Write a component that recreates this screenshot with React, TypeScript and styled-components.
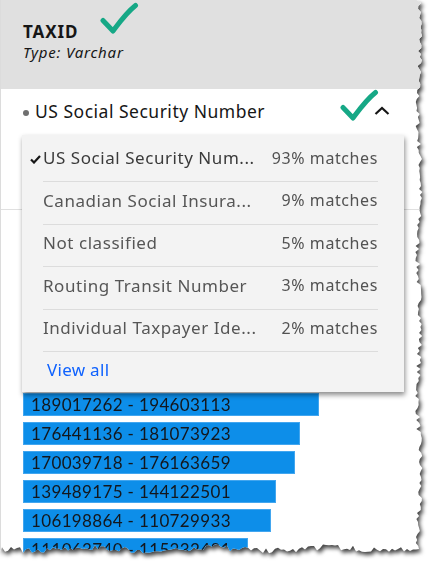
import React from 'react';
import styled, { createGlobalStyle } from 'styled-components';

const GlobalStyle = createGlobalStyle`
  html, body {
    margin: 0;
    padding: 0;
    background: #ffffff;
  }
  body {
    font-family: 'Noto Sans', Roboto, sans-serif;
    color: #161616;
  }
`;

const CARD_W = 428;
const CARD_H = 560;

// deterministic jagged "torn paper" outline for the right and bottom edges
const tornEdge = (): string => {
  let seed = 7;
  const rnd = () => {
    seed = (seed * 16807) % 2147483647;
    return seed / 2147483647;
  };
  const pts: string[] = ['0px 0px'];
  for (let y = 0; y <= 546; y += 3) {
    const x = 419 + (rnd() - 0.5) * 5 + Math.sin(y / 23) * 1.5;
    pts.push(`${x.toFixed(1)}px ${y}px`);
  }
  for (let x = 419; x >= 0; x -= 3) {
    const y = 549 + (rnd() - 0.5) * 6 + Math.sin(x / 19) * 1.5;
    pts.push(`${x}px ${y.toFixed(1)}px`);
  }
  pts.push('0px 552px');
  return `polygon(${pts.join(', ')})`;
};

const Page = styled.div`
  width: 436px;
  height: 572px;
  overflow: hidden;
  background: #ffffff;
`;

const Paper = styled.div`
  filter: drop-shadow(2px 3px 2px rgba(0, 0, 0, 0.75));
  width: ${CARD_W}px;
  height: ${CARD_H}px;
`;

const Card = styled.div`
  position: relative;
  width: ${CARD_W}px;
  height: ${CARD_H}px;
  background: #ffffff;
  border-left: 1px solid #dcdcdc;
  box-sizing: border-box;
`;

const Header = styled.div`
  height: 89px;
  background: #e0e0e0;
  padding: 22px 0 0 22px;
  box-sizing: border-box;
  display: flex;
  flex-direction: column;
  gap: 1px;
`;

const Title = styled.div`
  font-size: 17px;
  font-weight: 700;
  letter-spacing: 0.9px;
  line-height: 20px;
  color: #161616;
`;

const TypeLabel = styled.div`
  font-size: 15px;
  font-style: italic;
  font-weight: 400;
  letter-spacing: 0.8px;
  line-height: 18px;
  color: #161616;
`;

const SelectedRow = styled.div`
  height: 46px;
  display: flex;
  align-items: center;
  padding: 0 0 2px 22px;
  box-sizing: border-box;
  gap: 6px;
`;

const Dot = styled.span`
  width: 6px;
  height: 6px;
  border-radius: 50%;
  background: #6f6f6f;
  margin-top: 3px;
`;

const SelectedText = styled.span`
  font-size: 17.5px;
  letter-spacing: 0.5px;
  color: #161616;
  flex: 1;
`;

const Chevron = styled.svg`
  margin-right: 38px;
`;

const Divider = styled.div`
  height: 74px;
  border-bottom: 1px solid #e0e0e0;
`;

const Bars = styled.div`
  padding: 183px 0 0 22px;
  display: flex;
  flex-direction: column;
  gap: 6px;
`;

const Bar = styled.div<{ $w: number }>`
  width: ${p => p.$w}px;
  height: 23px;
  background: #0d8ee9;
  box-shadow: inset 0 0 0 1px rgba(120, 190, 245, 0.5);
  font-family: Lato, 'Noto Sans', sans-serif;
  font-size: 17px;
  letter-spacing: 0.35px;
  line-height: 23px;
  padding-left: 8px;
  box-sizing: border-box;
  color: #14171c;
  white-space: nowrap;
`;

const Menu = styled.div`
  position: absolute;
  top: 135px;
  left: 21px;
  width: 382px;
  height: 257px;
  background: #f3f3f3;
  box-shadow: 1px 3px 5px rgba(0, 0, 0, 0.45);
  padding: 4.5px 26px 0 21px;
  box-sizing: border-box;
`;

const MenuItem = styled.div<{ $selected?: boolean }>`
  position: relative;
  height: 42.5px;
  box-sizing: border-box;
  padding-bottom: 5px;
  border-bottom: 1px solid #dcdcdc;
  display: flex;
  align-items: center;
  justify-content: space-between;
  font-size: 17px;
  letter-spacing: 0.55px;
  color: ${p => (p.$selected ? '#3a3a3a' : '#565656')};
`;

const ItemCheck = styled.svg`
  position: absolute;
  left: -13px;
  top: 15px;
`;

const Matches = styled.span`
  color: #525252;
  font-size: 16px;
  letter-spacing: 0.6px;
`;

const ViewAll = styled.a`
  display: block;
  padding: 6px 0 0 4px;
  font-size: 17px;
  color: #0f62fe;
  letter-spacing: 0.3px;
`;

const Annotation = styled.svg`
  position: absolute;
`;

const GreenCheck: React.FC<{ left: number; top: number }> = ({ left, top }) => (
  <Annotation
    width="44"
    height="36"
    viewBox="0 0 44 36"
    style={{ left, top }}
  >
    <path
      d="M4 18.5 L14 29 C20 21 27 11 36.5 3.5"
      fill="none"
      stroke="#16a886"
      strokeWidth="5"
      strokeLinecap="round"
      strokeLinejoin="round"
    />
  </Annotation>
);

const items = [
  { label: 'US Social Security Num...', pct: '93% matches', selected: true },
  { label: 'Canadian Social Insura...', pct: '9% matches' },
  { label: 'Not classified', pct: '5% matches' },
  { label: 'Routing Transit Number', pct: '3% matches' },
  { label: 'Individual Taxpayer Ide...', pct: '2% matches' },
];

const bars = [
  { label: '189017262 - 194603113', w: 296 },
  { label: '176441136 - 181073923', w: 277 },
  { label: '170039718 - 176163659', w: 272 },
  { label: '139489175 - 144122501', w: 253 },
  { label: '106198864 - 110729933', w: 248 },
  { label: '111063740 - 115332481', w: 225 },
];

const edge = tornEdge();

export default function App() {
  return (
    <Page>
      <GlobalStyle />
      <Paper>
        <Card style={{ clipPath: edge }}>
          <Header>
            <Title>TAXID</Title>
            <TypeLabel>Type: Varchar</TypeLabel>
          </Header>
          <SelectedRow>
            <Dot />
            <SelectedText>US Social Security Number</SelectedText>
            <Chevron width="16" height="10" viewBox="0 0 16 10">
              <path
                d="M1.5 8 L8 2 L14.5 8"
                fill="none"
                stroke="#161616"
                strokeWidth="2.2"
              />
            </Chevron>
          </SelectedRow>
          <Divider />
          <Bars>
            {bars.map(b => (
              <Bar key={b.label} $w={b.w}>
                {b.label}
              </Bar>
            ))}
          </Bars>

          <Menu>
            {items.map(it => (
              <MenuItem key={it.label} $selected={it.selected}>
                {it.selected && (
                  <ItemCheck width="11" height="9" viewBox="0 0 11 9">
                    <path
                      d="M1 4.5 L4 7.5 L10 1"
                      fill="none"
                      stroke="#161616"
                      strokeWidth="2.2"
                    />
                  </ItemCheck>
                )}
                <span>{it.label}</span>
                <Matches>{it.pct}</Matches>
              </MenuItem>
            ))}
            <ViewAll>View all</ViewAll>
          </Menu>

          <GreenCheck left={98} top={2} />
          <GreenCheck left={338} top={89} />
        </Card>
      </Paper>
    </Page>
  );
}
